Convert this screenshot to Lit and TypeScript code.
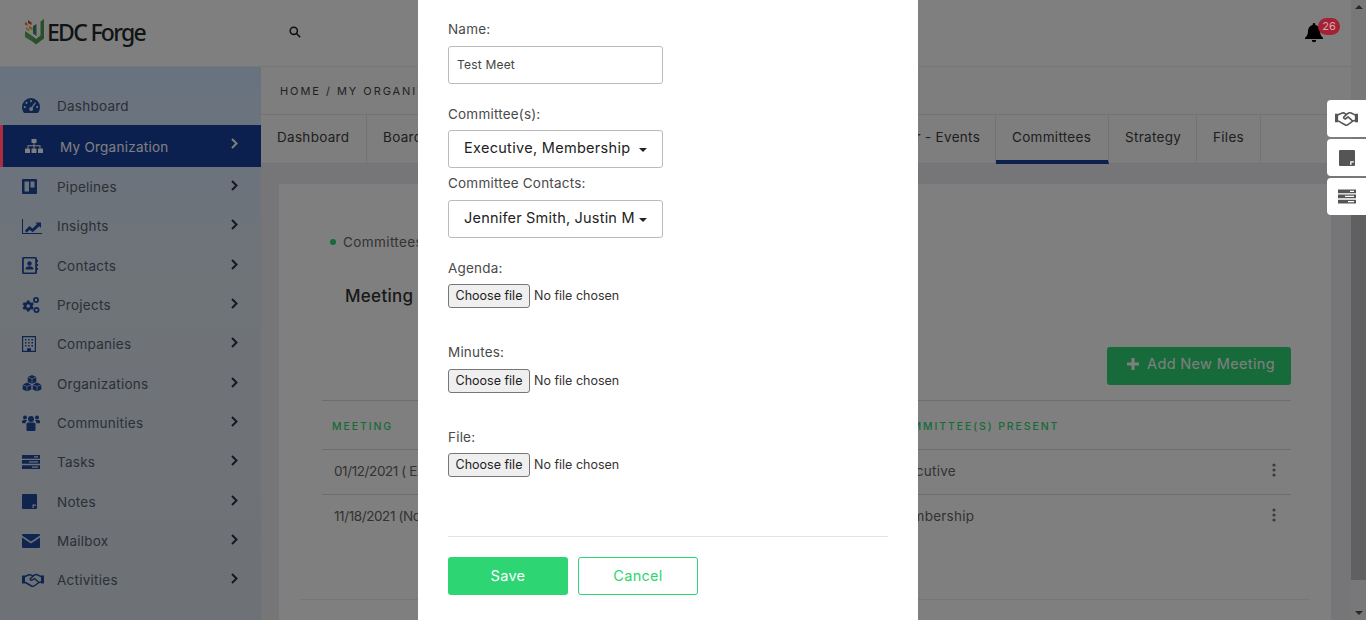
import { LitElement, html, css, svg } from 'lit';
import { customElement } from 'lit/decorators.js';

const box = (w: number, h: number, vb: string, body: unknown) =>
  html`<svg width="${w}" height="${h}" viewBox="${vb}" fill="currentColor">${body}</svg>`;

const cube = (x: number, y: number) =>
  `M${x} ${y}l4 1.800-4 1.800-4-1.800zM${x - 4.3} ${y + 2.3}l4 1.800v4.600l-4-1.800zM${x + 0.3} ${y + 4.1}l4-1.800v4.600l-4 1.800z`;

const notesPath = svg`<path fill-rule="evenodd" d="M1 0h13a1 1 0 0 1 1 1v13a1 1 0 0 1-1 1H1a1 1 0 0 1-1-1V1a1 1 0 0 1 1-1zM10.500 10.500v3.500h1.200v-2.300H14v-1.200z"/>`;
const tasksPath = svg`<path fill-rule="evenodd" d="M0 0h18v3.800H0zm12 1.300v1.200h4V1.300zM0 5h18v3.800H0zm7 1.300v1.200h9V6.300zM0 10.200h18V14H0zm10 1.300v1.200h6v-1.200z"/>`;
const handshakePath = svg`<path d="M0 2.500h3v8H0zM19 2.500h3v8h-3z"/><path fill="none" stroke="currentColor" stroke-width="1.500" stroke-linejoin="round" stroke-linecap="round" d="M3 3.500 7 1.800c1.200-.5 2 0 3 .7l1 .7M19 3.500l-3.500-1.700c-1.500-.6-2.500-.3-3.500.5L8.500 5.500c-.8 1 .8 2.400 2 1.500l2-1.500L17 9.500l2-.5M3.500 9.500l6 3.500c1 .6 1.800.5 2.500 0l5-3.500"/>`;

const icons: Record<string, unknown> = {
  dashboard: box(18, 15, '0 0 18 15', svg`<path fill-rule="evenodd" d="M9 0a9 9 0 0 1 9 9c0 2.200-.6 4.200-1.700 5.400-.2.300-.5.500-.9.500H2.600c-.4 0-.7-.2-.9-.5C.6 13.200 0 11.200 0 9a9 9 0 0 1 9-9zM9 2a1.100 1.100 0 1 0 0 2.200A1.100 1.100 0 0 0 9 2zM4.500 3.700a1.100 1.100 0 1 0 0 2.200 1.100 1.100 0 0 0 0-2.200zM2.800 8a1.100 1.100 0 1 0 0 2.200 1.100 1.100 0 0 0 0-2.200zm12.400 0a1.100 1.100 0 1 0 0 2.200 1.100 1.100 0 0 0 0-2.200zM13 4.200 9.500 9.100a2 2 0 1 0 1.200.7L14 5z"/>`),
  org: box(18, 14, '0 0 18 14', svg`<rect x="6.500" y="0" width="5" height="4" rx=".6"/><rect x="0" y="9.500" width="5" height="4.500" rx=".6"/><rect x="6.500" y="9.500" width="5" height="4.500" rx=".6"/><rect x="13" y="9.500" width="5" height="4.500" rx=".6"/><path d="M8.500 4h1v2.300h6V9.500h-1V7.300h-5v2.200h-1V7.300h-5v2.200h-1V6.300h6z"/>`),
  pipelines: box(15, 15, '0 0 15 15', svg`<path fill-rule="evenodd" d="M1 0h13a1 1 0 0 1 1 1v13a1 1 0 0 1-1 1H1a1 1 0 0 1-1-1V1a1 1 0 0 1 1-1zm1.500 2.500v10h4.500v-10zm6 0v6h4v-6z"/>`),
  insights: box(20, 15, '0 0 20 15', svg`<path d="M0 0h1v14h19v1H0z"/><path d="M3 11.500 7.500 7l3 2.500L15 5l-1.500-1.500H19V9l-1.700-1.700-6.600 6-3-2.600-3.200 3z"/>`),
  contacts: box(16, 17, '0 0 16 17', svg`<path fill-rule="evenodd" d="M1.500 0h12A1.500 1.500 0 0 1 15 1.500v14a1.500 1.500 0 0 1-1.500 1.500h-12A1.500 1.500 0 0 1 0 15.500v-14A1.500 1.500 0 0 1 1.500 0zm.3 1.500v14h11.400v-14z"/><circle cx="7.500" cy="6.500" r="2.200"/><path d="M3.500 12.500c0-2.200 1.500-3.200 4-3.200s4 1 4 3.200z"/><rect x="15" y="3" width="1" height="2"/><rect x="15" y="7" width="1" height="2"/><rect x="15" y="11" width="1" height="2"/>`),
  projects: box(18, 16, '0 0 18 16', svg`<path fill-rule="evenodd" d="M5 3.500h2.400l.4 1.500 1.300.7 1.500-.5 1.200 2-1.100 1.100v1.400l1.100 1.100-1.200 2-1.500-.5-1.300.7-.4 1.500H5l-.4-1.500-1.300-.7-1.500.5-1.200-2 1.100-1.100V8.300L.6 7.200l1.200-2 1.500.5 1.300-.7zM6.200 7.200a1.800 1.800 0 1 0 0 3.600 1.800 1.800 0 0 0 0-3.600z"/><path fill-rule="evenodd" d="M14 0a3 3 0 1 1 0 6 3 3 0 0 1 0-6zm0 1.800a1.200 1.200 0 1 0 0 2.400 1.200 1.200 0 0 0 0-2.400zM14.500 10a3 3 0 1 1 0 6 3 3 0 0 1 0-6zm0 1.800a1.200 1.200 0 1 0 0 2.400 1.200 1.200 0 0 0 0-2.400z"/>`),
  companies: box(14, 16, '0 0 14 16', svg`<path fill-rule="evenodd" d="M0 0h14v16H0zm1.200 1.200v13.600h3.800v-2.500h4v2.500h3.800V1.200z"/><path d="M3 3h1.500v1.500H3zm3.200 0h1.500v1.500H6.200zm3.200 0H11v1.500H9.400zM3 6h1.500v1.500H3zm3.200 0h1.500v1.500H6.200zm3.200 0H11v1.500H9.400zM3 9h1.500v1.500H3zm3.200 0h1.500v1.500H6.200zm3.200 0H11v1.500H9.400z"/>`),
  organizations: box(20, 17, '0 0 20 17', svg`<path d="${cube(10, 0) + cube(5, 7.6) + cube(15, 7.6)}"/>`),
  communities: box(18, 16, '0 0 18 16', svg`<circle cx="9" cy="4" r="3"/><circle cx="3" cy="2.500" r="2"/><circle cx="15" cy="2.500" r="2"/><path d="M4.500 9.500C4.500 8 5.500 7.500 7 7.500h4c1.500 0 2.500.5 2.500 2V15a1 1 0 0 1-1 1h-7a1 1 0 0 1-1-1z"/><path d="M0 6.500C0 5.500.8 5 1.800 5h2.400c.4 0 .8.200 1 .5-1 .500-1.700 1.500-1.700 2.800H.8c-.5 0-.8-.3-.8-.8zM18 6.500c0-1-.8-1.500-1.800-1.500h-2.400c-.4 0-.8.200-1 .5 1 .500 1.700 1.500 1.700 2.800h2.700c.5 0 .8-.3.8-.8z"/>`),
  tasks: box(18, 14, '0 0 18 14', tasksPath),
  notes: box(15, 15, '0 0 15 15', notesPath),
  mailbox: box(18, 14, '0 0 18 14', svg`<path d="M1 0h16a1 1 0 0 1 1 1v.6L9 7.500 0 1.600V1a1 1 0 0 1 1-1zM0 3.500l9 5.900 9-5.900V13a1 1 0 0 1-1 1H1a1 1 0 0 1-1-1z"/>`),
  activities: box(22, 14, '0 0 22 14', handshakePath),
};

const navItems = [
  { label: 'Dashboard', icon: 'dashboard', noArrow: true },
  { label: 'My Organization', icon: 'org', active: true },
  { label: 'Pipelines', icon: 'pipelines' },
  { label: 'Insights', icon: 'insights' },
  { label: 'Contacts', icon: 'contacts' },
  { label: 'Projects', icon: 'projects' },
  { label: 'Companies', icon: 'companies' },
  { label: 'Organizations', icon: 'organizations' },
  { label: 'Communities', icon: 'communities' },
  { label: 'Tasks', icon: 'tasks' },
  { label: 'Notes', icon: 'notes' },
  { label: 'Mailbox', icon: 'mailbox' },
  { label: 'Activities', icon: 'activities' },
];

const tabs = [
  { label: 'Dashboard', width: 106 },
  { label: 'Board Members', width: 150 },
  { label: 'Calendar', width: 130 },
  { label: 'Newsletter', width: 198 },
  { label: 'Calendar - Events', width: 151 },
  { label: 'Committees', width: 113, active: true },
  { label: 'Strategy', width: 88 },
  { label: 'Files', width: 64 },
];

const rows = [
  { meeting: '01/12/2021 ( Executive )', committee: 'Executive' },
  { meeting: '11/18/2021 (November)', committee: 'Membership' },
];

@customElement('app-root')
export class AppRoot extends LitElement {
  static styles = css`
    :host {
      display: block;
      position: relative;
      width: 1366px;
      height: 620px;
      overflow: hidden;
      font-family: Inter, 'Noto Sans', sans-serif;
      font-size: 13.5px;
      color: #555;
      background: #fff;
    }
    .page {
      display: flex;
      height: 620px;
    }
    .page-main {
      flex: 1;
      min-width: 0;
      display: flex;
      flex-direction: column;
    }
    .topbar {
      height: 67px;
      flex: none;
      display: flex;
      align-items: center;
      background: #fff;
      border-bottom: 1px solid #eceef0;
      box-sizing: border-box;
      padding: 0 28px 2px 25px;
    }
    .logo {
      display: flex;
      align-items: center;
      width: 264px;
      color: #1e2a2a;
      font-family: 'Noto Sans', sans-serif;
      font-size: 23px;
      font-weight: 500;
      letter-spacing: -1.7px;
    }
    .search {
      color: #222;
      display: flex;
    }
    .bell {
      margin-left: auto;
      display: flex;
      color: #000;
      margin-top: 2px;
    }
    .shell {
      flex: 1;
      display: flex;
      min-height: 0;
    }
    .sidebar {
      width: 261px;
      flex: none;
      box-sizing: border-box;
      padding-top: 18.66px;
      background: linear-gradient(180deg, #d2e6ff 0%, #dfe8f2 40%, #dde3ea 100%);
      color: #55606f;
    }
    .nav-item {
      height: 39.34px;
      display: flex;
      align-items: center;
      box-sizing: border-box;
      padding: 0.6px 0 0 22px;
      font-size: 13.5px;
      letter-spacing: 0.25px;
    }
    .nav-item .icon {
      width: 35px;
      display: flex;
      color: #1f4aa0;
    }
    .nav-item .arrow {
      margin: -3px 23px 0 auto;
      display: flex;
      color: #2a3140;
    }
    .nav-item.active {
      height: 42px;
      padding-top: 0;
      background: #16409f;
      border-left: 3px solid #e0304a;
      color: #fff;
    }
    .nav-item.active .icon {
      color: #fff;
    }
    .nav-item.active .arrow {
      color: #fff;
      margin-top: -5px;
    }
    .nav-item.active .text {
      position: relative;
      top: 1px;
    }
    .content {
      flex: 1;
      min-width: 0;
      display: flex;
      flex-direction: column;
      background: #ececf0;
    }
    .crumbs {
      height: 47px;
      flex: none;
      box-sizing: border-box;
      padding: 17px 0 0 19px;
      background: #fdfdfd;
      font-size: 11px;
      font-weight: 400;
      letter-spacing: 1.95px;
      color: #444;
      white-space: nowrap;
    }
    .tabs {
      display: flex;
      height: 50px;
      flex: none;
      box-sizing: border-box;
      background: #fdfdfd;
      border-top: 1px solid #e6e6e6;
      border-bottom: 1px solid #e6e6e6;
      white-space: nowrap;
    }
    .tab {
      box-sizing: border-box;
      padding: 0 0 5px 16px;
      display: flex;
      align-items: center;
      border-right: 1px solid #e6e6e6;
      color: #3c3c3c;
      font-size: 13.5px;
      letter-spacing: 0.3px;
      margin-bottom: -1px;
    }
    .tab.active {
      padding-bottom: 1px;
      border-bottom: 4px solid #16409f;
    }
    .card {
      flex: 1;
      margin: 20px 20px 0 18px;
      background: #fff;
      box-sizing: border-box;
      padding: 49px 40px 0 43px;
      min-height: 0;
    }
    .bullet {
      display: flex;
      align-items: center;
      gap: 7px;
      margin-left: 8px;
      font-size: 13.5px;
      letter-spacing: 0.4px;
      color: #666;
      height: 18px;
    }
    .bullet i {
      width: 6px;
      height: 6px;
      border-radius: 50%;
      background: #2ed573;
    }
    h2 {
      margin: 34px 0 0 23px;
      font-size: 17px;
      font-weight: 500;
      letter-spacing: 0.3px;
      color: #333;
      line-height: 22px;
    }
    .toolbar {
      display: flex;
      justify-content: flex-end;
      margin-top: 40px;
    }
    .add {
      width: 184px;
      height: 38px;
      border-radius: 3px;
      background: #2ed573;
      color: #fff;
      display: flex;
      align-items: center;
      justify-content: center;
      gap: 8px;
      font-size: 14.5px;
      font-weight: 400;
      letter-spacing: 0.35px;
      padding: 0 0 5px 4px;
      box-sizing: border-box;
    }
    .table {
      margin-top: 15px;
      border-top: 1px solid #ddd;
    }
    .row {
      display: grid;
      grid-template-columns: 558px 1fr 19px;
      align-items: center;
      padding: 0 0 2px 12px;
      height: 42px;
      border-top: 1px solid #ddd;
      color: #666;
      font-size: 13.5px;
      letter-spacing: 0.25px;
    }
    .row .meeting {
      letter-spacing: -0.4px;
    }
    .row.head {
      padding: 3px 0 0 10px;
      grid-template-columns: 560px 1fr 19px;
      height: 45px;
      border-top: none;
      color: #2ed573;
      font-size: 10.5px;
      font-weight: 500;
      letter-spacing: 1.9px;
    }
    .kebab {
      display: flex;
      color: #777;
      margin-bottom: 3px;
    }
    .foot-line {
      margin: 60px -19px 0 -22px;
      border-top: 1px solid #ececec;
    }
    .scrollbar {
      width: 15px;
      flex: none;
      position: relative;
      background: #f1f1f1;
      display: flex;
      flex-direction: column;
      align-items: center;
      justify-content: space-between;
      box-sizing: border-box;
      padding: 5px 0;
    }
    .scrollbar .thumb {
      position: absolute;
      left: 0;
      right: 0;
      top: 215px;
      height: 365px;
      background: #c1c1c1;
    }
    .arrow-up,
    .arrow-down {
      width: 0;
      height: 0;
      border-left: 4px solid transparent;
      border-right: 4px solid transparent;
    }
    .arrow-up {
      border-bottom: 4px solid #505050;
    }
    .arrow-down {
      border-top: 4px solid #505050;
    }
    .backdrop {
      position: absolute;
      inset: 0;
      background: rgba(0, 0, 0, 0.5);
    }
    .badge {
      position: absolute;
      left: 1318px;
      top: 18px;
      width: 22px;
      height: 17px;
      border-radius: 9px;
      background: #a32335;
      color: #d9a8ae;
      font-size: 11px;
      line-height: 17px;
      text-align: center;
    }
    .active-mark {
      position: absolute;
      left: 0;
      top: 125px;
      width: 3px;
      height: 42px;
      background: #ac2c40;
    }
    .modal {
      position: absolute;
      left: 418px;
      top: 0;
      width: 500px;
      height: 620px;
      background: #fff;
      box-sizing: border-box;
      padding: 21px 30px 0;
      display: flex;
      flex-direction: column;
      color: #4a4a4a;
    }
    label {
      display: block;
      font-size: 13.5px;
      line-height: 17px;
      letter-spacing: 0.2px;
    }
    .name-input {
      display: block;
      width: 215px;
      height: 38px;
      margin-top: 8px;
      box-sizing: border-box;
      border: 1px solid #bbb;
      border-radius: 3px;
      padding: 0 8px 2px;
      font: inherit;
      font-size: 12px;
      letter-spacing: 0.2px;
      color: #444;
      background: #fff;
    }
    .picker {
      width: 215px;
      height: 38px;
      box-sizing: border-box;
      border: 1px solid #bbb;
      border-radius: 3px;
      padding: 0 15px 3px;
      display: flex;
      align-items: center;
      gap: 3px;
      color: #222;
      font-size: 14.5px;
      font-weight: 400;
      letter-spacing: 0.3px;
      white-space: nowrap;
    }
    .picker .value {
      flex: 1;
      min-width: 0;
      overflow: hidden;
    }
    .caret {
      flex: none;
      width: 0;
      height: 0;
      border-left: 4px solid transparent;
      border-right: 4px solid transparent;
      border-top: 4px solid #222;
      margin-top: 5px;
    }
    .committee-label {
      margin-top: 22px;
    }
    .committee-picker {
      margin-top: 7px;
    }
    .contacts-label {
      margin-top: 7px;
    }
    .contacts-picker {
      margin-top: 8px;
      gap: 4px;
      letter-spacing: 0.2px;
    }
    .file-row {
      display: flex;
      align-items: center;
      gap: 4px;
      height: 24px;
      margin-top: 7px;
      font-size: 12.5px;
      color: #333;
      white-space: nowrap;
    }
    .file-row span {
      margin-top: -2px;
    }
    .group-minutes .file-row {
      margin-top: 8px;
    }
    .choose {
      width: 82px;
      height: 24px;
      box-sizing: border-box;
      padding: 0 0 2px;
      border: 1px solid #767676;
      border-radius: 3px;
      background: #efefef;
      font: inherit;
      color: #222;
    }
    .group-agenda {
      margin-top: 22px;
    }
    .group-minutes,
    .group-file {
      margin-top: 36px;
    }
    hr {
      width: 100%;
      margin: 59px 0 0;
      border: none;
      border-top: 1px solid #e3e3e3;
    }
    .actions {
      display: flex;
      gap: 10px;
      margin-top: 20px;
    }
    .btn {
      width: 120px;
      height: 38px;
      box-sizing: border-box;
      padding-bottom: 2px;
      border-radius: 3px;
      display: flex;
      align-items: center;
      justify-content: center;
      font-size: 14.5px;
      font-weight: 400;
      letter-spacing: 0.3px;
    }
    .btn.save {
      background: #2ed573;
      color: #fff;
    }
    .btn.cancel {
      border: 1px solid #2ed573;
      color: #2ed573;
      background: #fff;
    }
    .quick {
      position: absolute;
      right: 0;
      top: 100px;
      display: flex;
      flex-direction: column;
      gap: 2px;
    }
    .quick div {
      width: 39px;
      height: 37px;
      background: #fff;
      border-radius: 4px 0 0 4px;
      display: flex;
      align-items: center;
      justify-content: center;
      color: #555;
    }
  `;

  private renderLogo() {
    return html`<svg width="22" height="26" viewBox="0 0 22 26">
      <path d="M0 3l2.500 1.500V7L0 5.500z" fill="#e0803a" />
      <path d="M1 8l3.500 2v2.500L1 10.500z" fill="#e8c040" />
      <path d="M3 1l3.500 2.500v2.500L3 4z" fill="#d8403a" />
      <path d="M4 6.500l3.500 2.500v2.500L4 9z" fill="#e8a838" />
      <path d="M0 12l8 5.500V23L0 18z" fill="#5aa855" />
      <path d="M8 17.500V23l3 2.500 8-6V0l-3.500 2.500v14L11 20z" fill="#4f9e52" />
      <path d="M8 7l3.500-2v12L8 14.500z" fill="#3e8a6a" />
    </svg>`;
  }

  private renderNav() {
    return navItems.map(
      (item) => html`
        <div class="nav-item ${item.active ? 'active' : ''}">
          <span class="icon">${icons[item.icon]}</span>
          <span class="text">${item.label}</span>
          ${item.noArrow
            ? ''
            : html`<span class="arrow">
                <svg width="7" height="11" viewBox="0 0 7 11" fill="none" stroke="currentColor" stroke-width="2">
                  <path d="M1 1l4.500 4.500L1 10" />
                </svg>
              </span>`}
        </div>
      `,
    );
  }

  private renderFile(id: string, text: string) {
    return html`
      <div class="group-${id}">
        <label>${text}</label>
        <div class="file-row">
          <button class="choose">Choose file</button>
          <span>No file chosen</span>
        </div>
      </div>
    `;
  }

  render() {
    return html`
      <div class="page">
        <div class="page-main">
          <header class="topbar">
            <div class="logo">${this.renderLogo()}<span>EDC Forge</span></div>
            <span class="search">
              <svg width="12" height="12" viewBox="0 0 12 12" fill="none" stroke="currentColor" stroke-width="1.600">
                <circle cx="4.800" cy="4.800" r="3.600" />
                <path d="M7.500 7.500 11.200 11.200" />
              </svg>
            </span>
            <span class="bell">
              <svg width="18" height="20" viewBox="0 0 18 20" fill="currentColor">
                <path d="M9 0a1.300 1.300 0 0 1 1.300 1.300v.6c2.800.6 4.700 3 4.700 6 0 3.500 1 5 3 6.800V16H0v-1.300c2-1.800 3-3.300 3-6.800 0-3 1.900-5.400 4.700-6v-.6A1.300 1.300 0 0 1 9 0z" />
                <path d="M6.800 17h4.400a2.200 2.200 0 0 1-4.400 0z" />
              </svg>
            </span>
          </header>
          <div class="shell">
            <aside class="sidebar">${this.renderNav()}</aside>
            <main class="content">
              <div class="crumbs">HOME / MY ORGANIZATION / COMMITTEES</div>
              <nav class="tabs">
                ${tabs.map(
                  (t) => html`<div class="tab ${t.active ? 'active' : ''}" style="width:${t.width}px">${t.label}</div>`,
                )}
              </nav>
              <section class="card">
                <div class="bullet"><i></i>Committees</div>
                <h2>Meeting Minutes</h2>
                <div class="toolbar">
                  <div class="add">
                    <svg width="12" height="12" viewBox="0 0 12 12" fill="currentColor">
                      <path d="M4.500 0h3v4.500H12v3H7.500V12h-3V7.500H0v-3h4.500z" />
                    </svg>
                    Add New Meeting
                  </div>
                </div>
                <div class="table">
                  <div class="row head"><span>MEETING</span><span>COMMITTEE(S) PRESENT</span><span></span></div>
                  ${rows.map(
                    (r) => html`
                      <div class="row">
                        <span class="meeting">${r.meeting}</span>
                        <span>${r.committee}</span>
                        <span class="kebab">
                          <svg width="4" height="14" viewBox="0 0 4 14" fill="currentColor">
                            <circle cx="2" cy="2" r="1.600" /><circle cx="2" cy="7" r="1.600" /><circle cx="2" cy="12" r="1.600" />
                          </svg>
                        </span>
                      </div>
                    `,
                  )}
                </div>
                <div class="foot-line"></div>
              </section>
            </main>
          </div>
        </div>
        <div class="scrollbar">
          <span class="arrow-up"></span>
          <span class="thumb"></span>
          <span class="arrow-down"></span>
        </div>
      </div>

      <div class="backdrop"></div>
      <div class="active-mark"></div>
      <span class="badge">26</span>

      <div class="quick">
        <div>${box(23, 15, '0 0 22 14', handshakePath)}</div>
        <div>${box(16, 16, '0 0 15 15', notesPath)}</div>
        <div>${box(18, 15, '0 0 18 14', tasksPath)}</div>
      </div>

      <div class="modal">
        <label>Name:</label>
        <input class="name-input" value="Test Meet" />
        <label class="committee-label">Committee(s):</label>
        <div class="picker committee-picker">
          <span class="value">Executive, Membership</span><span class="caret"></span>
        </div>
        <label class="contacts-label">Committee Contacts:</label>
        <div class="picker contacts-picker">
          <span class="value">Jennifer Smith, Justin Miller</span><span class="caret"></span>
        </div>
        ${this.renderFile('agenda', 'Agenda:')}
        ${this.renderFile('minutes', 'Minutes:')}
        ${this.renderFile('file', 'File:')}
        <hr />
        <div class="actions">
          <div class="btn save">Save</div>
          <div class="btn cancel">Cancel</div>
        </div>
      </div>
    `;
  }
}
